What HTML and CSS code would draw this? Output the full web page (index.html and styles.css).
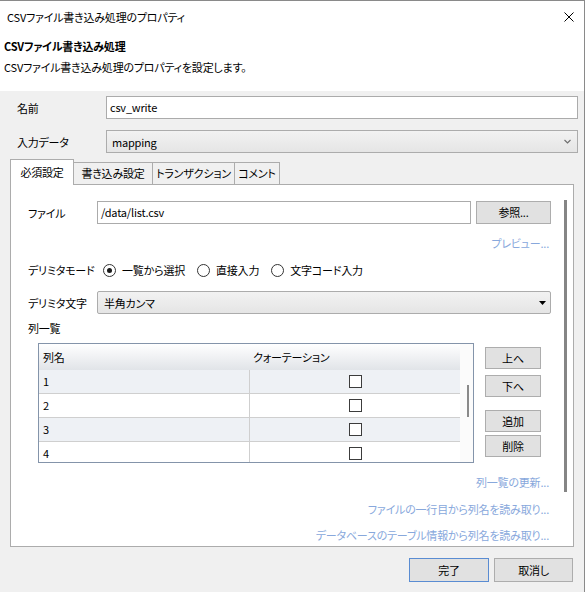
FILE: index.html
```html
<!DOCTYPE html>
<html lang="ja">
<head>
<meta charset="utf-8">
<title>CSVファイル書き込み処理のプロパティ</title>
<link rel="stylesheet" href="styles.css">
</head>
<body>
<div class="window">
  <div class="titlebar">
    <span class="title">CSVファイル書き込み処理のプロパティ</span>
    <span class="close">
      <svg width="10" height="10" viewBox="0 0 10 10"><path d="M0.5 0.5 L9.5 9.5 M9.5 0.5 L0.5 9.5" stroke="#000" stroke-width="1" fill="none"/></svg>
    </span>
  </div>

  <div class="header">
    <div class="h-title">CSVファイル書き込み処理</div>
    <div class="h-sub">CSVファイル書き込み処理のプロパティを設定します。</div>
  </div>

  <div class="main">
    <div class="field">
      <span class="label">名前</span>
      <div class="textbox">csv_write</div>
    </div>
    <div class="field">
      <span class="label">入力データ</span>
      <div class="combo combo-flat">
        <span>mapping</span>
        <svg class="chevron" width="7" height="5" viewBox="0 0 7 5"><path d="M0.5 1 L3.5 4 L6.5 1" stroke="#707070" stroke-width="1.2" fill="none"/></svg>
      </div>
    </div>

    <div class="tabs">
      <div class="tab tab-active w1">必須設定</div>
      <div class="tab w2">書き込み設定</div>
      <div class="tab w3">トランザクション</div>
      <div class="tab w4">コメント</div>
    </div>

    <div class="panel">
      <div class="prow">
        <span class="plabel">ファイル</span>
        <div class="textbox">/data/list.csv</div>
        <div class="btn btn-browse">参照...</div>
      </div>
      <div class="link link-preview">プレビュー...</div>

      <div class="prow radios">
        <span class="plabel">デリミタモード</span>
        <span class="radio checked"></span><span class="rlabel">一覧から選択</span>
        <span class="radio"></span><span class="rlabel">直接入力</span>
        <span class="radio"></span><span class="rlabel">文字コード入力</span>
      </div>

      <div class="prow delim">
        <span class="plabel">デリミタ文字</span>
        <div class="combo combo-round">
          <span>半角カンマ</span>
          <svg width="7" height="4" viewBox="0 0 7 4"><path d="M0 0 H7 L3.5 4 Z" fill="#000"/></svg>
        </div>
      </div>

      <div class="list-label">列一覧</div>

      <div class="list-area">
        <div class="grid">
          <div class="grid-body">
            <div class="grid-head">
              <div class="c1">列名</div>
              <div class="c2">クォーテーション</div>
            </div>
            <div class="grid-row alt"><div class="c1">1</div><div class="c2"><span class="check"></span></div></div>
            <div class="grid-row"><div class="c1">2</div><div class="c2"><span class="check"></span></div></div>
            <div class="grid-row alt"><div class="c1">3</div><div class="c2"><span class="check"></span></div></div>
            <div class="grid-row"><div class="c1">4</div><div class="c2"><span class="check"></span></div></div>
          </div>
          <div class="grid-scroll"><span class="grid-thumb"></span></div>
        </div>
        <div class="side-buttons">
          <div class="btn sbtn">上へ</div>
          <div class="btn sbtn s2">下へ</div>
          <div class="btn sbtn s3">追加</div>
          <div class="btn sbtn s4">削除</div>
        </div>
      </div>

      <div class="link l1">列一覧の更新...</div>
      <div class="link l2">ファイルの一行目から列名を読み取り...</div>
      <div class="link l3">データベースのテーブル情報から列名を読み取り...</div>

      <span class="panel-thumb"></span>
    </div>
  </div>

  <div class="footer">
    <div class="btn fbtn btn-default">完了</div>
    <div class="btn fbtn">取消し</div>
  </div>
</div>
</body>
</html>
```

FILE: styles.css
```css
* { box-sizing: border-box; }

html, body { margin: 0; padding: 0; }

body {
  background: #f0f0f0;
  font-family: "Noto Sans CJK JP", "Noto Sans", sans-serif;
  font-size: 11px;
  line-height: 16px;
  letter-spacing: -0.2px;
  color: #000;
  font-feature-settings: "palt";
}

.window {
  width: 585px;
  height: 592px;
  border-top: 1px solid #8a8a8a;
  border-right: 1px solid #8a8a8a;
  display: flex;
  flex-direction: column;
  overflow: hidden;
}

/* title bar */
.titlebar {
  height: 31px;
  background: #fff;
  display: flex;
  align-items: center;
  justify-content: space-between;
  padding: 0 10px 0 7px;
}
.close { display: flex; }

/* header band */
.header {
  height: 59px;
  background: #fff;
  padding: 5px 4px 0;
}
.h-title { font-weight: bold; line-height: 18px; }
.h-sub { line-height: 18px; margin-top: 3px; }

/* main area */
.main { padding: 5px 6px 0 0; }

.field {
  display: flex;
  align-items: center;
  height: 23px;
  padding-left: 17px;
}
.field + .field { margin-top: 11px; }
.field .label { width: 89px; flex: none; }

.textbox {
  flex: 1;
  height: 23px;
  border: 1px solid #ababab;
  background: #fff;
  padding: 0 3px;
  line-height: 21px;
}

.combo {
  flex: 1;
  height: 23px;
  border: 1px solid #acacac;
  background: linear-gradient(#f2f2f2, #e5e5e5);
  display: flex;
  align-items: center;
  justify-content: space-between;
}
.combo-flat { padding: 0 6px 0 5px; }
.combo-round { border-radius: 2px; padding: 0 4px 0 6px; }

/* tabs */
.tabs {
  margin: 6px 0 0 10px;
  height: 25px;
  display: flex;
  align-items: flex-end;
  position: relative;
  z-index: 1;
}
.tab {
  height: 22px;
  border: 1px solid #acacac;
  border-bottom: none;
  background: #f0f0f0;
  text-align: center;
  line-height: 20px;
  margin-left: -1px;
  white-space: nowrap;
}
.tab-active {
  height: 26px;
  margin-bottom: -1px;
  margin-left: 0;
  background: #fff;
  line-height: 25px;
}
.w1 { width: 64px; }
.w2 { width: 80px; }
.w3 { width: 83px; }
.w4 { width: 46px; }

/* tab page */
.panel {
  position: relative;
  margin-left: 10px;
  width: 564px;
  height: 363px;
  border: 1px solid #acacac;
  background: #fff;
  padding: 16px 22px 0 17px;
}

.prow { display: flex; align-items: center; }
.plabel { width: 69px; flex: none; white-space: nowrap; }
.prow .textbox { flex: 1; }

.btn {
  background: #e1e1e1;
  border: 1px solid #adadad;
  text-align: center;
}
.btn-browse {
  width: 75px;
  height: 23px;
  margin-left: 5px;
  line-height: 21px;
}

.link {
  color: #88a8dc;
  text-align: right;
  line-height: 16px;
  padding-right: 2px;
}
.link-preview { margin-top: 11px; }

.radios { margin-top: 10px; height: 18px; }
.radio {
  width: 13px;
  height: 13px;
  border: 1px solid #333;
  border-radius: 50%;
  background: #fff;
  flex: none;
  margin-right: 6px;
  position: relative;
}
.radios .plabel + .radio { margin-left: 6px; }
.radio.checked::after {
  content: "";
  position: absolute;
  left: 3px;
  top: 3px;
  width: 5px;
  height: 5px;
  border-radius: 50%;
  background: #1a1a1a;
}
.rlabel { margin-right: 12px; }

.delim { margin-top: 12px; height: 23px; }

.list-label { margin-top: 6px; }

/* column list */
.list-area { display: flex; margin-top: 7px; }

.grid {
  margin-left: 10px;
  width: 436px;
  height: 120px;
  border: 1px solid #8494aa;
  background: #fff;
  display: flex;
  overflow: hidden;
}
.grid-body { width: 421px; flex: none; }
.grid-head {
  height: 26px;
  display: flex;
  align-items: center;
  background: linear-gradient(#ffffff, #f3f4f6 40%, #e1e4e8);
}
.c1 { width: 211px; padding-left: 4px; flex: none; }
.c2 { width: 210px; padding-left: 3px; flex: none; }
.grid-row {
  height: 24px;
  display: flex;
  border-bottom: 1px solid #cfcfcf;
  background: #fff;
}
.grid-row.alt { background: #eef1f5; }
.grid-row .c1 {
  border-right: 1px solid #cfcfcf;
  line-height: 23px;
}
.grid-row .c2 {
  padding: 0;
  display: flex;
  align-items: center;
  justify-content: center;
}
.check {
  width: 13px;
  height: 13px;
  border: 1px solid #3c3c3c;
  background: #fff;
}
.grid-scroll {
  position: relative;
  flex: 1;
  background: #fbfbfb;
}
.grid-thumb {
  position: absolute;
  left: 7px;
  top: 41px;
  width: 2px;
  height: 32px;
  background: #8a8a8a;
}

.side-buttons {
  margin: 4px 0 0 11px;
  width: 56px;
  display: flex;
  flex-direction: column;
}
.sbtn { height: 22px; line-height: 20px; }
.s2 { margin-top: 6px; }
.s3 { margin-top: 13px; }
.s4 { margin-top: 3px; }

.l1 { margin-top: 11px; }
.l2 { margin-top: 11px; }
.l3 { margin-top: 10px; }

.panel-thumb {
  position: absolute;
  left: 553px;
  top: 15px;
  width: 3px;
  height: 292px;
  background: #858585;
}

/* dialog buttons */
.footer {
  margin-top: 11px;
  display: flex;
  justify-content: flex-end;
  padding-right: 11px;
}
.fbtn { height: 24px; line-height: 22px; }
.btn-default { width: 80px; margin-right: 5px; border-color: #5a8cd2; }
.fbtn + .fbtn { width: 79px; }
```
